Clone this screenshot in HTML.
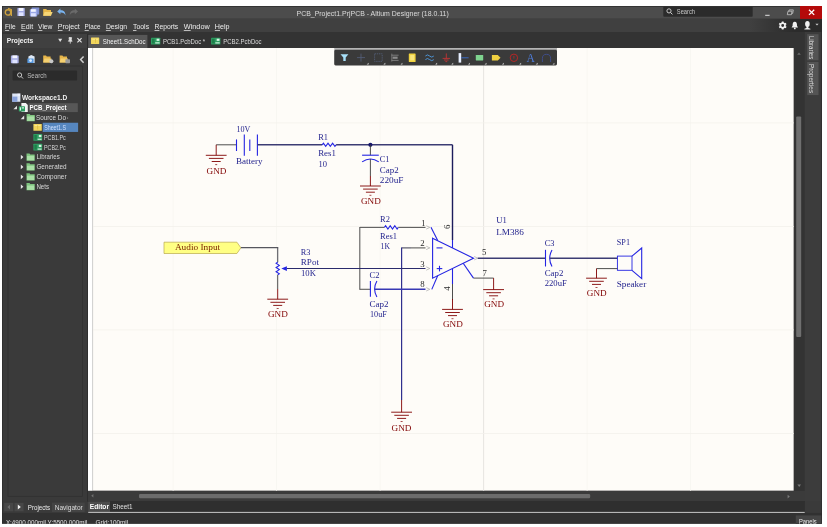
<!DOCTYPE html>
<html lang="en">
<head>
<meta charset="utf-8">
<title>PCB_Project1.PrjPCB - Altium Designer (18.0.11)</title>
<style>
html,body{margin:0;padding:0;background:#ffffff;}
body{width:827px;height:527px;overflow:hidden;position:relative;}
svg{position:absolute;left:0;top:0;display:block;will-change:transform;}
text.u{font-family:"Liberation Sans","DejaVu Sans",sans-serif;}
text.s{font-family:"Liberation Serif","DejaVu Serif",serif;}
</style>
</head>
<body>
<svg width="827" height="527" viewBox="0 0 827 527">
<defs>
<linearGradient id="mg" x1="0" x2="1" y1="0" y2="0"><stop offset="0" stop-color="#404040"/><stop offset="1" stop-color="#2b2b2b"/></linearGradient>
<clipPath id="appclip"><rect x="2" y="6" width="820" height="517.7"/></clipPath>
</defs>

<g id="chrome" clip-path="url(#appclip)">
<rect x="2" y="6" width="820" height="517.7" fill="#3a3a3a" />
<rect x="2" y="6" width="820" height="13" fill="#4c4c4c" />
<rect x="2" y="18.5" width="820" height="0.8" fill="#3a3a3a" />
<rect x="2" y="19" width="820" height="13" fill="#404040" />
<rect x="750" y="19" width="45" height="13" fill="url(#mg)" />
<rect x="795" y="19" width="27" height="13" fill="#2b2b2b" />
<rect x="2" y="32" width="820" height="16" fill="#333333" />
<rect x="2" y="34" width="85.3" height="14" fill="#404040" />
<rect x="2" y="48" width="85.3" height="454" fill="#3a3a3a" />
<rect x="87.3" y="34" width="0.9" height="468" fill="#2a2a2a" />
<rect x="88" y="48" width="705.8" height="442.8" fill="#fefcf8" />
<rect x="88" y="48" width="4.2" height="442.8" fill="#ffffff" />
<rect x="92.2" y="48" width="0.9" height="442.8" fill="#c9c9c9" />
<rect x="793.8" y="48" width="11" height="443" fill="#333333" />
<rect x="796.2" y="116.5" width="5" height="220.5" fill="#6f6f6f" rx="1"/>
<rect x="88" y="490.8" width="717" height="10.2" fill="#3b3b3b" />
<rect x="139" y="493.9" width="451.2" height="4.4" fill="#6c6c6c" rx="1.2"/>
<rect x="804.8" y="32" width="17.200000000000045" height="470" fill="#3c3c3c" />
<rect x="807.2" y="34.2" width="11.3" height="26.1" fill="#545454" />
<rect x="807.2" y="61.9" width="11.3" height="33.2" fill="#545454" />
<rect x="2" y="501.6" width="820" height="11" fill="#3a3a3a" />
<rect x="88" y="501" width="717" height="11.6" fill="#2f2f2f" />
<rect x="4.2" y="502.9" width="9.1" height="8.4" fill="#474747" />
<rect x="14.5" y="502.9" width="9.1" height="8.4" fill="#474747" />
<rect x="52" y="502.6" width="32.6" height="9.4" fill="#444444" />
<rect x="88.2" y="501.5" width="21.8" height="10.6" fill="#4c4c4c" />
<rect x="88.2" y="511.9" width="716.6" height="1" fill="#d6d6d6" />
<rect x="2" y="512.9" width="820" height="10.800000000000068" fill="#313131" />
<rect x="804.8" y="501.6" width="17.200000000000045" height="11" fill="#3a3a3a" />
<rect x="795.8" y="515.4" width="26.2" height="9" fill="#454545" />
<rect x="2.35" y="6.35" width="819.3" height="517" fill="none" stroke="#2c2c2c" stroke-width="0.7"/>
</g>
<g id="titlebar">
<circle cx="8" cy="12.4" r="2.7" fill="none" stroke="#cfa441" stroke-width="1.4"/>
<path d="M8 8.3 L11.4 9.6 L11.4 16" stroke="#cfa441" stroke-width="1.2" fill="none" />
<rect x="17.4" y="8" width="7.4" height="8" fill="#a4abe4" rx="0.6"/>
<rect x="18.8" y="8" width="4.6" height="3" fill="#f2f4ff" />
<rect x="18.8" y="12.4" width="4.6" height="3.6" fill="#dfe4ff" />
<rect x="31.6" y="7.6" width="7.6" height="7" fill="#7f8fd0" rx="0.6"/>
<rect x="29.8" y="9.2" width="7.4" height="7.2" fill="#9aa8e6" rx="0.6"/>
<rect x="31" y="9.2" width="4.8" height="2.6" fill="#f2f4ff" />
<rect x="31" y="13.2" width="4.8" height="3.2" fill="#dfe4ff" />
<path d="M43.2 9 L46.2 9 L47 10 L51 10 L51 15.8 L43.2 15.8 Z" stroke="none" stroke-width="0" fill="#e8b84a" />
<path d="M44.6 12 L52.6 12 L51 15.8 L43.2 15.8 Z" stroke="none" stroke-width="0" fill="#f6d676" />
<path d="M57.2 11.4 L60.4 8.6 L60.4 10.3 C63.6 10.2 65.6 12 65.4 15.4 C64.6 13.4 63.2 12.5 60.4 12.6 L60.4 14.2 Z" stroke="none" stroke-width="0" fill="#79b4f0" />
<path d="M78 11.4 L74.8 8.6 L74.8 10.3 C71.6 10.2 69.6 12 69.8 15.4 C70.6 13.4 72 12.5 74.8 12.6 L74.8 14.2 Z" stroke="none" stroke-width="0" fill="#6a6a6a" />
<text x="296.5" y="15.6" font-size="7.2" fill="#dcdcdc" class="u" textLength="152.3" lengthAdjust="spacingAndGlyphs" >PCB_Project1.PrjPCB - Altium Designer (18.0.11)</text>
<rect x="663.3" y="6.8" width="89.4" height="9.9" fill="#2b2b2b" rx="0.8"/>
<circle cx="669" cy="10.9" r="2.1" stroke="#d8d8d8" stroke-width="0.9" fill="none"/>
<line x1="670.6" y1="12.5" x2="672.4" y2="14.4" stroke="#d8d8d8" stroke-width="1" />
<text x="676.8" y="14" font-size="7" fill="#c8c8c8" class="u" textLength="18.2" lengthAdjust="spacingAndGlyphs" >Search</text>
<rect x="765.2" y="14.8" width="4.4" height="1" fill="#e0e0e0" />
<path d="M788 11.2 L792 11.2 L791.4 14.7 L787.3 14.7 Z M788.8 11.2 L789.2 9.9 L793.3 9.9 L792.7 13.4 L791.8 13.4" stroke="#d0d0d0" stroke-width="0.75" fill="none" />
<rect x="800" y="6" width="22" height="12.9" fill="#b40a0a" />
<path d="M809 9.7 L814.2 14.9 M814.2 9.7 L809 14.9" stroke="#ffffff" stroke-width="1.3" fill="none" />
</g>
<g id="menubar">
<text x="5.1" y="29.1" font-size="7.3" fill="#ececec" class="u" textLength="10.6" lengthAdjust="spacingAndGlyphs" ><tspan text-decoration="underline">F</tspan>ile</text>
<text x="21" y="29.1" font-size="7.3" fill="#ececec" class="u" textLength="12.1" lengthAdjust="spacingAndGlyphs" ><tspan text-decoration="underline">E</tspan>dit</text>
<text x="38" y="29.1" font-size="7.3" fill="#ececec" class="u" textLength="14.5" lengthAdjust="spacingAndGlyphs" ><tspan text-decoration="underline">V</tspan>iew</text>
<text x="57.8" y="29.1" font-size="7.3" fill="#ececec" class="u" textLength="22.0" lengthAdjust="spacingAndGlyphs" ><tspan text-decoration="underline">P</tspan>roject</text>
<text x="84.6" y="29.1" font-size="7.3" fill="#ececec" class="u" textLength="15.8" lengthAdjust="spacingAndGlyphs" ><tspan text-decoration="underline">P</tspan>lace</text>
<text x="105.9" y="29.1" font-size="7.3" fill="#ececec" class="u" textLength="21.2" lengthAdjust="spacingAndGlyphs" ><tspan text-decoration="underline">D</tspan>esign</text>
<text x="133" y="29.1" font-size="7.3" fill="#ececec" class="u" textLength="16.1" lengthAdjust="spacingAndGlyphs" ><tspan text-decoration="underline">T</tspan>ools</text>
<text x="154.5" y="29.1" font-size="7.3" fill="#ececec" class="u" textLength="23.7" lengthAdjust="spacingAndGlyphs" ><tspan text-decoration="underline">R</tspan>eports</text>
<text x="183.8" y="29.1" font-size="7.3" fill="#ececec" class="u" textLength="25.9" lengthAdjust="spacingAndGlyphs" ><tspan text-decoration="underline">W</tspan>indow</text>
<text x="214.8" y="29.1" font-size="7.3" fill="#ececec" class="u" textLength="14.7" lengthAdjust="spacingAndGlyphs" ><tspan text-decoration="underline">H</tspan>elp</text>
<g transform="translate(782.7 25.5)">
<circle r="2.3" fill="none" stroke="#f2f2f2" stroke-width="1.7"/>
<rect x="-0.9" y="-4" width="1.8" height="1.6" fill="#f2f2f2" transform="rotate(0)"/>
<rect x="-0.9" y="-4" width="1.8" height="1.6" fill="#f2f2f2" transform="rotate(60)"/>
<rect x="-0.9" y="-4" width="1.8" height="1.6" fill="#f2f2f2" transform="rotate(120)"/>
<rect x="-0.9" y="-4" width="1.8" height="1.6" fill="#f2f2f2" transform="rotate(180)"/>
<rect x="-0.9" y="-4" width="1.8" height="1.6" fill="#f2f2f2" transform="rotate(240)"/>
<rect x="-0.9" y="-4" width="1.8" height="1.6" fill="#f2f2f2" transform="rotate(300)"/>
</g>
<path d="M794.8 21.8 C796.8 21.8 797 24 797 25.8 L798 27.4 L791.6 27.4 L792.6 25.8 C792.6 24 792.8 21.8 794.8 21.8 Z" stroke="none" stroke-width="0" fill="#f2f2f2" />
<circle cx="794.8" cy="28.4" r="0.9" fill="#f2f2f2"/>
<ellipse cx="807.4" cy="24" rx="2.3" ry="2.9" fill="#f2f2f2"/>
<path d="M806.6 26 L808.2 26 L808.4 28 L810.4 28.8 L810.4 29.6 L804.4 29.6 L804.4 28.8 L806.4 28 Z" stroke="none" stroke-width="0" fill="#f2f2f2" />
<path d="M815.4 23.8 L818.6 23.8 L817 25.6 Z" stroke="none" stroke-width="0" fill="#cfcfcf" />
</g>
<g id="tabs">
<text x="6.7" y="43.2" font-size="7.3" fill="#f0f0f0" class="u" font-weight="bold" textLength="26.7" lengthAdjust="spacingAndGlyphs" >Projects</text>
<path d="M58.2 38.8 L62.2 38.8 L60.2 42 Z" stroke="none" stroke-width="0" fill="#e0e0e0" />
<path d="M69 37.6 L71.6 37.6 L71.2 40 L72.2 41.2 L68.4 41.2 L69.4 40 Z M70.3 41.2 L70.3 43.6" stroke="#e0e0e0" stroke-width="0.8" fill="#e0e0e0" />
<path d="M77.4 38.2 L81.6 42.4 M81.6 38.2 L77.4 42.4" stroke="#e8e8e8" stroke-width="1.1" fill="none" />
<rect x="88.2" y="34.9" width="59.2" height="13.1" fill="#575757" />
<rect x="91" y="37.5" width="8.2" height="6.5" fill="#f2d65c" rx="0.5"/>
<rect x="92.2" y="38.8" width="5.8" height="0.7" fill="#fdf0a8" />
<rect x="95" y="38.8" width="0.7" height="4" fill="#d9b840" />
<text x="102.8" y="44" font-size="7.2" fill="#f4f4f4" class="u" textLength="42.8" lengthAdjust="spacingAndGlyphs" >Sheet1.SchDoc</text>
<rect x="151" y="37.8" width="9.3" height="6.6" fill="#2f9e62" rx="0.5"/>
<rect x="152" y="38.8" width="2.6" height="4.6" fill="#1d7f4a" />
<rect x="156.6" y="38.699999999999996" width="2.8" height="2.2" fill="#d8f5e4" />
<rect x="155.2" y="42.4" width="4.4" height="1" fill="#e6fff0" />
<text x="162.9" y="44" font-size="7.2" fill="#dcdcdc" class="u" textLength="42.3" lengthAdjust="spacingAndGlyphs" >PCB1.PcbDoc *</text>
<rect x="211.1" y="37.8" width="9.3" height="6.6" fill="#2f9e62" rx="0.5"/>
<rect x="212.1" y="38.8" width="2.6" height="4.6" fill="#1d7f4a" />
<rect x="216.7" y="38.699999999999996" width="2.8" height="2.2" fill="#d8f5e4" />
<rect x="215.29999999999998" y="42.4" width="4.4" height="1" fill="#e6fff0" />
<text x="223.3" y="44" font-size="7.2" fill="#dcdcdc" class="u" textLength="38.3" lengthAdjust="spacingAndGlyphs" >PCB2.PcbDoc</text>
</g>
<g id="projects-panel">
<rect x="10.9" y="55.4" width="7.8" height="7.8" fill="#a9afe6" rx="0.6"/>
<rect x="12.4" y="55.4" width="4.8" height="2.8" fill="#f2f4ff" />
<rect x="12.4" y="59.8" width="4.8" height="3.4" fill="#dfe4ff" />
<path d="M28.4 56.4 L31.2 55 L34.6 56.4 L34.6 63 L28.4 63 Z" stroke="none" stroke-width="0" fill="#dfe9f6" />
<rect x="27.4" y="58.4" width="6.2" height="4.6" fill="#5a9be0" rx="0.5"/>
<circle cx="30.6" cy="60.6" r="1.4" fill="#dfeeff"/>
<path d="M43.2 55.6 L46 55.6 L46.8 56.6 L50.6 56.6 L50.6 62.6 L43.2 62.6 Z" stroke="none" stroke-width="0" fill="#e6b54a" />
<path d="M44.4 58.4 L51.6 58.4 L50.6 62.6 L43.2 62.6 Z" stroke="none" stroke-width="0" fill="#f4d070" />
<circle cx="51.4" cy="61.2" r="2" fill="#c9c9c9"/>
<path d="M59.6 55.6 L62.4 55.6 L63.2 56.6 L67 56.6 L67 62.6 L59.6 62.6 Z" stroke="none" stroke-width="0" fill="#e6b54a" />
<path d="M60.8 58.4 L68 58.4 L67 62.6 L59.6 62.6 Z" stroke="none" stroke-width="0" fill="#f4d070" />
<rect x="65.4" y="59.2" width="4.6" height="4" fill="#9a9a9a" rx="0.6"/>
<path d="M83.6 56.4 L80.6 59.6 L83.6 62.8" stroke="#d0d0d0" stroke-width="1.5" fill="none" />
<rect x="8" y="66" width="74.6" height="430.3" fill="none" stroke="#2f2f2f" stroke-width="0.7"/>
<rect x="12.6" y="70.6" width="64.5" height="10" fill="#2b2b2b" rx="0.8"/>
<circle cx="19.6" cy="75" r="2.1" stroke="#cfcfcf" stroke-width="0.9" fill="none"/>
<line x1="21.2" y1="76.6" x2="23" y2="78.5" stroke="#cfcfcf" stroke-width="1" />
<text x="27.3" y="78.2" font-size="7" fill="#bdbdbd" class="u" textLength="19.3" lengthAdjust="spacingAndGlyphs" >Search</text>
<path d="M12.2 93.39999999999999 L17.6 93.39999999999999 L20.4 96.0 L20.4 101.8 L12.2 101.8 Z" stroke="none" stroke-width="0" fill="#dde5f5" />
<rect x="12.2" y="96.6" width="5.2" height="5.2" fill="#8aa3dd" />
<rect x="17.6" y="93.39999999999999" width="2.8" height="2.6" fill="#eef2ff" />
<text x="21.9" y="100.2" font-size="7.2" fill="#f2f2f2" class="u" font-weight="bold" textLength="45.3" lengthAdjust="spacingAndGlyphs" >Workspace1.D</text>
<rect x="28.6" y="103.17999999999999" width="49.2" height="8.9" fill="#575757" />
<path d="M17.0 105.67999999999999 L17.0 109.27999999999999 L13.4 109.27999999999999 Z" stroke="none" stroke-width="0" fill="#e4e4e4" />
<path d="M21.4 103.08 L25.8 103.08 L27.8 104.88 L27.8 111.88 L21.4 111.88 Z" stroke="none" stroke-width="0" fill="#f4f4f4" />
<rect x="18.8" y="106.27999999999999" width="6.2" height="5.2" fill="#2f9e62" rx="0.4"/>
<rect x="19.8" y="107.27999999999999" width="1.2" height="3.2" fill="#dff5e8" />
<rect x="21.8" y="107.27999999999999" width="2.2" height="1.2" fill="#dff5e8" />
<text x="29.5" y="110.08" font-size="7.2" fill="#ffffff" class="u" font-weight="bold" textLength="37.0" lengthAdjust="spacingAndGlyphs" >PCB_Project</text>
<path d="M24.2 115.56 L24.2 119.16 L20.6 119.16 Z" stroke="none" stroke-width="0" fill="#e4e4e4" />
<path d="M26.6 113.96000000000001 L29.6 113.96000000000001 L30.400000000000002 114.96000000000001 L34.8 114.96000000000001 L34.8 121.16000000000001 L26.6 121.16000000000001 Z" stroke="none" stroke-width="0" fill="#7fc47f" />
<rect x="27.1" y="116.36000000000001" width="7.2" height="4.4" fill="#a9dfa6" />
<text x="35.9" y="119.96000000000001" font-size="7.2" fill="#dadada" class="u" textLength="30.1" lengthAdjust="spacingAndGlyphs" >Source Do</text>
<circle cx="67.6" cy="117.96000000000001" r="0.5" fill="#d0d0d0"/>
<rect x="42.7" y="122.74" width="35.4" height="9.2" fill="#5686be" />
<rect x="33.4" y="124.03999999999999" width="8.4" height="6.6" fill="#f2d65c" rx="0.5"/>
<rect x="34.6" y="125.24" width="6" height="0.7" fill="#fdf0a8" />
<rect x="37.4" y="125.24" width="0.7" height="4.2" fill="#d9b840" />
<text x="44.2" y="129.84" font-size="7.2" fill="#cfe0ff" class="u" textLength="21.8" lengthAdjust="spacingAndGlyphs" >Sheet1.S</text>
<rect x="33.4" y="133.92" width="8.8" height="6.8" fill="#2f9e62" rx="0.5"/>
<rect x="34.4" y="134.92" width="2.4" height="4.8" fill="#1d7f4a" />
<rect x="38.8" y="134.92" width="2.6" height="2.2" fill="#d8f5e4" />
<rect x="37.6" y="138.72" width="4" height="1" fill="#e6fff0" />
<text x="44" y="139.72" font-size="7.2" fill="#dadada" class="u" textLength="21.8" lengthAdjust="spacingAndGlyphs" >PCB1.Pc</text>
<rect x="33.4" y="143.79999999999998" width="8.8" height="6.8" fill="#2f9e62" rx="0.5"/>
<rect x="34.4" y="144.79999999999998" width="2.4" height="4.8" fill="#1d7f4a" />
<rect x="38.8" y="144.79999999999998" width="2.6" height="2.2" fill="#d8f5e4" />
<rect x="37.6" y="148.6" width="4" height="1" fill="#e6fff0" />
<text x="44" y="149.6" font-size="7.2" fill="#dadada" class="u" textLength="21.8" lengthAdjust="spacingAndGlyphs" >PCB2.Pc</text>
<path d="M20.8 154.67999999999998 L23.400000000000002 157.07999999999998 L20.8 159.48 Z" stroke="none" stroke-width="0" fill="#e4e4e4" />
<path d="M26.5 153.48 L29.5 153.48 L30.3 154.48 L34.7 154.48 L34.7 160.67999999999998 L26.5 160.67999999999998 Z" stroke="none" stroke-width="0" fill="#7fc47f" />
<rect x="27.0" y="155.88" width="7.2" height="4.4" fill="#a9dfa6" />
<text x="36.4" y="159.48" font-size="7.2" fill="#dadada" class="u" textLength="23.4" lengthAdjust="spacingAndGlyphs" >Libraries</text>
<path d="M20.8 164.56 L23.400000000000002 166.96 L20.8 169.36 Z" stroke="none" stroke-width="0" fill="#e4e4e4" />
<path d="M26.5 163.36 L29.5 163.36 L30.3 164.36 L34.7 164.36 L34.7 170.56 L26.5 170.56 Z" stroke="none" stroke-width="0" fill="#7fc47f" />
<rect x="27.0" y="165.76000000000002" width="7.2" height="4.4" fill="#a9dfa6" />
<text x="36.4" y="169.36" font-size="7.2" fill="#dadada" class="u" textLength="30.2" lengthAdjust="spacingAndGlyphs" >Generated</text>
<path d="M20.8 174.44 L23.400000000000002 176.84 L20.8 179.24 Z" stroke="none" stroke-width="0" fill="#e4e4e4" />
<path d="M26.5 173.24 L29.5 173.24 L30.3 174.24 L34.7 174.24 L34.7 180.44 L26.5 180.44 Z" stroke="none" stroke-width="0" fill="#7fc47f" />
<rect x="27.0" y="175.64000000000001" width="7.2" height="4.4" fill="#a9dfa6" />
<text x="36.4" y="179.24" font-size="7.2" fill="#dadada" class="u" textLength="30.2" lengthAdjust="spacingAndGlyphs" >Componer</text>
<path d="M20.8 184.32 L23.400000000000002 186.72 L20.8 189.12 Z" stroke="none" stroke-width="0" fill="#e4e4e4" />
<path d="M26.5 183.12 L29.5 183.12 L30.3 184.12 L34.7 184.12 L34.7 190.32 L26.5 190.32 Z" stroke="none" stroke-width="0" fill="#7fc47f" />
<rect x="27.0" y="185.52" width="7.2" height="4.4" fill="#a9dfa6" />
<text x="36.4" y="189.12" font-size="7.2" fill="#dadada" class="u" textLength="12.6" lengthAdjust="spacingAndGlyphs" >Nets</text>
</g>
<g id="right-strip">
<text x="0" y="0" font-size="7.3" fill="#dcdcdc" class="u" textLength="23.2" lengthAdjust="spacingAndGlyphs" transform="translate(809.2 36) rotate(90)">Libraries</text>
<text x="0" y="0" font-size="7.3" fill="#dcdcdc" class="u" textLength="29.2" lengthAdjust="spacingAndGlyphs" transform="translate(809.2 63.9) rotate(90)">Properties</text>
<path d="M797.2 54.8 L799 52.4 L800.8 54.8 Z" stroke="none" stroke-width="0" fill="#6c6c6c" />
<path d="M797.4 484.6 L799.2 487 L801 484.6 Z" stroke="none" stroke-width="0" fill="#7a7a7a" />
<path d="M93.4 494 L91.2 495.8 L93.4 497.6 Z" stroke="none" stroke-width="0" fill="#707070" />
<path d="M787.6 494.8 L789.8 496.6 L787.6 498.4 Z" stroke="none" stroke-width="0" fill="#7a7a7a" />
</g>
<g id="bottom" clip-path="url(#appclip)">
<path d="M10 504.8 L7.4 507.1 L10 509.4 Z" stroke="none" stroke-width="0" fill="#6e6e6e" />
<path d="M17.8 504.6 L20.8 507.1 L17.8 509.6 Z" stroke="none" stroke-width="0" fill="#f4f4f4" />
<text x="27.8" y="509.5" font-size="7.2" fill="#ececec" class="u" textLength="22.4" lengthAdjust="spacingAndGlyphs" >Projects</text>
<text x="54.7" y="509.5" font-size="7.2" fill="#dcdcdc" class="u" textLength="28.1" lengthAdjust="spacingAndGlyphs" >Navigator</text>
<text x="89.8" y="509.2" font-size="7.2" fill="#ffffff" class="u" font-weight="bold" textLength="19.2" lengthAdjust="spacingAndGlyphs" >Editor</text>
<text x="112.4" y="509.2" font-size="7.2" fill="#e0e0e0" class="u" textLength="20.2" lengthAdjust="spacingAndGlyphs" >Sheet1</text>
<text x="5.9" y="524.5" font-size="7" fill="#e0e0e0" class="u" textLength="81.4" lengthAdjust="spacingAndGlyphs" >X:4900.000mil Y:5500.000mil</text>
<text x="95.6" y="524.5" font-size="7" fill="#e0e0e0" class="u" textLength="32.6" lengthAdjust="spacingAndGlyphs" >Grid:100mil</text>
<text x="799" y="524" font-size="7" fill="#ececec" class="u" textLength="17.6" lengthAdjust="spacingAndGlyphs" >Panels</text>
</g>
<g id="schematic">
<rect x="172.7" y="48" width="0.8" height="442.8" fill="#f7f5f0" />
<rect x="276.20000000000005" y="48" width="0.8" height="442.8" fill="#f7f5f0" />
<rect x="379.70000000000005" y="48" width="0.8" height="442.8" fill="#f7f5f0" />
<rect x="586.7" y="48" width="0.8" height="442.8" fill="#f7f5f0" />
<rect x="690.2" y="48" width="0.8" height="442.8" fill="#f7f5f0" />
<rect x="483.2" y="48" width="0.9" height="442.8" fill="#e4e2de" />
<rect x="93" y="122.5" width="700.8" height="0.8" fill="#f3f1ec" />
<rect x="93" y="226.0" width="700.8" height="0.8" fill="#f3f1ec" />
<rect x="93" y="329.5" width="700.8" height="0.8" fill="#f3f1ec" />
<rect x="93" y="433.0" width="700.8" height="0.8" fill="#f3f1ec" />
<line x1="216.2" y1="144.8" x2="236.5" y2="144.8" stroke="#3a3a3a" stroke-width="0.9" />
<line x1="216.2" y1="144.8" x2="216.2" y2="155.3" stroke="#800000" stroke-width="0.9" />
<line x1="205.79999999999998" y1="155.3" x2="226.6" y2="155.3" stroke="#800000" stroke-width="0.9" />
<line x1="208.89999999999998" y1="158.4" x2="223.5" y2="158.4" stroke="#800000" stroke-width="0.9" />
<line x1="211.7" y1="161.5" x2="220.7" y2="161.5" stroke="#800000" stroke-width="0.9" />
<line x1="215.2" y1="164.60000000000002" x2="217.2" y2="164.60000000000002" stroke="#800000" stroke-width="0.7" />
<text x="206.6" y="173.5" font-size="8.8" fill="#800000" class="s" textLength="19.8" lengthAdjust="spacingAndGlyphs" >GND</text>
<line x1="236.5" y1="139.4" x2="236.5" y2="151" stroke="#2424e2" stroke-width="1.1" />
<line x1="244.3" y1="134.6" x2="244.3" y2="155.8" stroke="#2424e2" stroke-width="1.1" />
<line x1="249.8" y1="139.4" x2="249.8" y2="151" stroke="#2424e2" stroke-width="1.1" />
<line x1="257.4" y1="134.6" x2="257.4" y2="155.8" stroke="#2424e2" stroke-width="1.1" />
<text x="236.5" y="131.8" font-size="9.1" fill="#24248e" class="s" textLength="13.9" lengthAdjust="spacingAndGlyphs" >10V</text>
<text x="236" y="164.3" font-size="9.1" fill="#24248e" class="s" textLength="26.6" lengthAdjust="spacingAndGlyphs" >Battery</text>
<line x1="257.4" y1="144.8" x2="322.2" y2="144.8" stroke="#3c3c74" stroke-width="1.4" />
<path d="M322.2 144.8 l1.2 -1.6 l2.3 3.2 l2.3 -3.2 l2.3 3.2 l2.3 -3.2 l2.3 3.2 l1.2 -1.6" stroke="#2424e2" stroke-width="1.1" fill="none" stroke-linejoin="miter"/>
<line x1="336.1" y1="144.8" x2="452.5" y2="144.8" stroke="#3c3c74" stroke-width="1.4" />
<text x="318.2" y="139.8" font-size="9.1" fill="#24248e" class="s" textLength="9.8" lengthAdjust="spacingAndGlyphs" >R1</text>
<text x="318.2" y="156.2" font-size="9.1" fill="#24248e" class="s" textLength="17.8" lengthAdjust="spacingAndGlyphs" >Res1</text>
<text x="318.5" y="166.5" font-size="9.1" fill="#24248e" class="s" textLength="8.5" lengthAdjust="spacingAndGlyphs" >10</text>
<circle cx="370.4" cy="144.8" r="2.1" fill="#16166c"/>
<line x1="370.4" y1="144.8" x2="370.4" y2="155.2" stroke="#3a3a3a" stroke-width="0.9" />
<line x1="362.1" y1="155.2" x2="378.8" y2="155.2" stroke="#2424e2" stroke-width="1.1" />
<path d="M362.1 161.9 Q370.4 156.2 378.8 161.9" stroke="#2424e2" stroke-width="1.1" fill="none" />
<line x1="370.4" y1="159.1" x2="370.4" y2="176" stroke="#3a3a3a" stroke-width="0.9" />
<line x1="370.4" y1="176" x2="370.4" y2="186" stroke="#800000" stroke-width="0.9" />
<line x1="360.0" y1="186.0" x2="380.79999999999995" y2="186.0" stroke="#800000" stroke-width="0.9" />
<line x1="363.09999999999997" y1="189.1" x2="377.7" y2="189.1" stroke="#800000" stroke-width="0.9" />
<line x1="365.9" y1="192.2" x2="374.9" y2="192.2" stroke="#800000" stroke-width="0.9" />
<line x1="369.4" y1="195.3" x2="371.4" y2="195.3" stroke="#800000" stroke-width="0.7" />
<text x="361" y="204.1" font-size="8.8" fill="#800000" class="s" textLength="19.8" lengthAdjust="spacingAndGlyphs" >GND</text>
<text x="379.8" y="162.1" font-size="9.1" fill="#24248e" class="s" textLength="9.7" lengthAdjust="spacingAndGlyphs" >C1</text>
<text x="379.8" y="172.5" font-size="9.1" fill="#24248e" class="s" textLength="18.8" lengthAdjust="spacingAndGlyphs" >Cap2</text>
<text x="379.8" y="182.8" font-size="9.1" fill="#24248e" class="s" textLength="23.7" lengthAdjust="spacingAndGlyphs" >220uF</text>
<line x1="452.5" y1="144.8" x2="452.5" y2="240" stroke="#1c1c5c" stroke-width="1.4" />
<line x1="452.5" y1="240" x2="452.5" y2="247.9" stroke="#2424e2" stroke-width="1.1" />
<path d="M432.6 238.2 L473.5 258.2 L432.6 278.2 Z" stroke="#2424e2" stroke-width="1.1" fill="none" stroke-linejoin="miter"/>
<line x1="359.8" y1="227.4" x2="384.4" y2="227.4" stroke="#5c5c5c" stroke-width="1.1" />
<path d="M384.4 227.4 l1.2 -1.6 l2.3 3.2 l2.3 -3.2 l2.3 3.2 l2.3 -3.2 l2.3 3.2 l1.2 -1.6" stroke="#2424e2" stroke-width="1.1" fill="none" stroke-linejoin="miter"/>
<line x1="398.3" y1="227.4" x2="411" y2="227.4" stroke="#5c5c5c" stroke-width="1.1" />
<line x1="411" y1="227.4" x2="425.5" y2="227.4" stroke="#3a3a3a" stroke-width="0.9" />
<path d="M426.2 225.70000000000002 L429.8 227.4 L426.2 229.1" stroke="#9a9a9a" stroke-width="0.6" fill="none" />
<line x1="431" y1="227.2" x2="437.7" y2="240.6" stroke="#2424e2" stroke-width="1.1" />
<line x1="359.8" y1="226.9" x2="359.8" y2="289.8" stroke="#5c5c5c" stroke-width="1.1" />
<text x="380.1" y="222.2" font-size="9.1" fill="#24248e" class="s" textLength="9.9" lengthAdjust="spacingAndGlyphs" >R2</text>
<text x="380.1" y="238.6" font-size="9.1" fill="#24248e" class="s" textLength="17.0" lengthAdjust="spacingAndGlyphs" >Res1</text>
<text x="380.5" y="248.9" font-size="9.1" fill="#24248e" class="s" textLength="9.5" lengthAdjust="spacingAndGlyphs" >1K</text>
<line x1="401.6" y1="247.9" x2="411" y2="247.9" stroke="#4a4a5c" stroke-width="1.1" />
<line x1="411" y1="247.9" x2="425.5" y2="247.9" stroke="#3a3a3a" stroke-width="0.9" />
<path d="M426.2 246.20000000000002 L429.8 247.9 L426.2 249.6" stroke="#9a9a9a" stroke-width="0.6" fill="none" />
<line x1="436.5" y1="247.9" x2="442.5" y2="247.9" stroke="#2424e2" stroke-width="1.1" />
<line x1="401.6" y1="247.4" x2="401.6" y2="400" stroke="#30308e" stroke-width="1.2" />
<line x1="401.6" y1="400" x2="401.6" y2="412.2" stroke="#800000" stroke-width="0.9" />
<line x1="391.20000000000005" y1="412.2" x2="412.0" y2="412.2" stroke="#800000" stroke-width="0.9" />
<line x1="394.3" y1="415.3" x2="408.90000000000003" y2="415.3" stroke="#800000" stroke-width="0.9" />
<line x1="397.1" y1="418.4" x2="406.1" y2="418.4" stroke="#800000" stroke-width="0.9" />
<line x1="400.6" y1="421.5" x2="402.6" y2="421.5" stroke="#800000" stroke-width="0.7" />
<text x="391.6" y="430.8" font-size="8.8" fill="#800000" class="s" textLength="19.8" lengthAdjust="spacingAndGlyphs" >GND</text>
<line x1="286.8" y1="268.5" x2="425.5" y2="268.5" stroke="#2a2a6c" stroke-width="1.15" />
<path d="M426.2 266.8 L429.8 268.5 L426.2 270.2" stroke="#9a9a9a" stroke-width="0.6" fill="none" />
<line x1="436.7" y1="268.6" x2="442.3" y2="268.6" stroke="#2424e2" stroke-width="1.1" />
<line x1="439.5" y1="265.8" x2="439.5" y2="271.4" stroke="#2424e2" stroke-width="1.1" />
<line x1="359.8" y1="289.3" x2="370.4" y2="289.3" stroke="#5c5c5c" stroke-width="1.1" />
<line x1="370.4" y1="280.9" x2="370.4" y2="296.8" stroke="#2424e2" stroke-width="1.1" />
<path d="M376.9 281 Q372.3 289 376.9 297" stroke="#2424e2" stroke-width="1.1" fill="none" />
<line x1="374.7" y1="289.3" x2="425.5" y2="289.3" stroke="#3838b4" stroke-width="1.4" />
<path d="M426.2 287.6 L429.8 289.3 L426.2 291.0" stroke="#9a9a9a" stroke-width="0.6" fill="none" />
<line x1="431.8" y1="289.4" x2="437.7" y2="275.7" stroke="#2424e2" stroke-width="1.1" />
<text x="369.5" y="277.6" font-size="9.1" fill="#24248e" class="s" textLength="10.0" lengthAdjust="spacingAndGlyphs" >C2</text>
<text x="369.5" y="306.8" font-size="9.1" fill="#24248e" class="s" textLength="19.1" lengthAdjust="spacingAndGlyphs" >Cap2</text>
<text x="370" y="316.9" font-size="9.1" fill="#24248e" class="s" textLength="16.8" lengthAdjust="spacingAndGlyphs" >10uF</text>
<text x="421.3" y="225.8" font-size="9.1" fill="#2a2a2a" class="s" textLength="4.3" lengthAdjust="spacingAndGlyphs" >1</text>
<text x="420.2" y="245.8" font-size="9.1" fill="#2a2a2a" class="s" textLength="4.4" lengthAdjust="spacingAndGlyphs" >2</text>
<text x="420.2" y="266.5" font-size="9.1" fill="#2a2a2a" class="s" textLength="4.4" lengthAdjust="spacingAndGlyphs" >3</text>
<text x="420.2" y="287" font-size="9.1" fill="#2a2a2a" class="s" textLength="4.4" lengthAdjust="spacingAndGlyphs" >8</text>
<text x="482" y="255.2" font-size="9.1" fill="#2a2a2a" class="s" textLength="4.4" lengthAdjust="spacingAndGlyphs" >5</text>
<text x="482.4" y="276.3" font-size="9.1" fill="#2a2a2a" class="s" textLength="4.4" lengthAdjust="spacingAndGlyphs" >7</text>
<text x="0" y="0" font-size="9.1" fill="#2a2a2a" class="s" textLength="4.4" lengthAdjust="spacingAndGlyphs" transform="translate(450.2 229) rotate(-90)">6</text>
<text x="0" y="0" font-size="9.1" fill="#2a2a2a" class="s" textLength="4.4" lengthAdjust="spacingAndGlyphs" transform="translate(450.2 290.8) rotate(-90)">4</text>
<line x1="452.5" y1="268.5" x2="452.5" y2="284" stroke="#2424e2" stroke-width="1.1" />
<line x1="452.5" y1="284" x2="452.5" y2="300" stroke="#3a3a3a" stroke-width="0.9" />
<line x1="452.5" y1="299" x2="452.5" y2="309.4" stroke="#800000" stroke-width="0.9" />
<line x1="442.1" y1="309.4" x2="462.9" y2="309.4" stroke="#800000" stroke-width="0.9" />
<line x1="445.2" y1="312.5" x2="459.8" y2="312.5" stroke="#800000" stroke-width="0.9" />
<line x1="448.0" y1="315.59999999999997" x2="457.0" y2="315.59999999999997" stroke="#800000" stroke-width="0.9" />
<line x1="451.5" y1="318.7" x2="453.5" y2="318.7" stroke="#800000" stroke-width="0.7" />
<text x="443" y="327" font-size="8.8" fill="#800000" class="s" textLength="19.8" lengthAdjust="spacingAndGlyphs" >GND</text>
<line x1="463.2" y1="263.2" x2="473.5" y2="278.1" stroke="#2424e2" stroke-width="1.1" />
<line x1="473.5" y1="278.1" x2="493.6" y2="278.1" stroke="#3a3a3a" stroke-width="0.9" />
<line x1="493.6" y1="278.1" x2="493.6" y2="289.6" stroke="#800000" stroke-width="0.9" />
<line x1="483.20000000000005" y1="289.6" x2="504.0" y2="289.6" stroke="#800000" stroke-width="0.9" />
<line x1="486.3" y1="292.70000000000005" x2="500.90000000000003" y2="292.70000000000005" stroke="#800000" stroke-width="0.9" />
<line x1="489.1" y1="295.8" x2="498.1" y2="295.8" stroke="#800000" stroke-width="0.9" />
<line x1="492.6" y1="298.90000000000003" x2="494.6" y2="298.90000000000003" stroke="#800000" stroke-width="0.7" />
<text x="484.2" y="307" font-size="8.8" fill="#800000" class="s" textLength="19.8" lengthAdjust="spacingAndGlyphs" >GND</text>
<path d="M474.2 256.5 L477.8 258.2 L474.2 259.9" stroke="#9a9a9a" stroke-width="0.6" fill="none" />
<line x1="477.8" y1="258.2" x2="545.5" y2="258.2" stroke="#3c3c74" stroke-width="1.4" />
<line x1="545.5" y1="249.8" x2="545.5" y2="266.5" stroke="#2424e2" stroke-width="1.1" />
<path d="M552 249.9 Q547.4 258.2 552 266.5" stroke="#2424e2" stroke-width="1.1" fill="none" />
<line x1="549.8" y1="258.2" x2="617.4" y2="258.2" stroke="#3c3c74" stroke-width="1.4" />
<text x="544.7" y="246.4" font-size="9.1" fill="#24248e" class="s" textLength="9.7" lengthAdjust="spacingAndGlyphs" >C3</text>
<text x="544.7" y="275.6" font-size="9.1" fill="#24248e" class="s" textLength="18.7" lengthAdjust="spacingAndGlyphs" >Cap2</text>
<text x="544.7" y="285.9" font-size="9.1" fill="#24248e" class="s" textLength="22.1" lengthAdjust="spacingAndGlyphs" >220uF</text>
<text x="496.2" y="223.4" font-size="9.1" fill="#24248e" class="s" textLength="10.6" lengthAdjust="spacingAndGlyphs" >U1</text>
<text x="496.2" y="234.5" font-size="9.1" fill="#24248e" class="s" textLength="27.6" lengthAdjust="spacingAndGlyphs" >LM386</text>
<rect x="617.4" y="256.1" width="14.6" height="14.2" fill="none" stroke="#2424e2" stroke-width="0.9"/>
<path d="M632 256.1 L641.7 248 L641.7 278.6 L632 270.3" stroke="#2424e2" stroke-width="1.1" fill="none" />
<line x1="596.5" y1="268.6" x2="617.4" y2="268.6" stroke="#3a3a3a" stroke-width="0.9" />
<line x1="596.5" y1="268.6" x2="596.5" y2="278.2" stroke="#800000" stroke-width="0.9" />
<line x1="586.1" y1="278.2" x2="606.9" y2="278.2" stroke="#800000" stroke-width="0.9" />
<line x1="589.2" y1="281.3" x2="603.8" y2="281.3" stroke="#800000" stroke-width="0.9" />
<line x1="592.0" y1="284.4" x2="601.0" y2="284.4" stroke="#800000" stroke-width="0.9" />
<line x1="595.5" y1="287.5" x2="597.5" y2="287.5" stroke="#800000" stroke-width="0.7" />
<text x="586.8" y="296.4" font-size="8.8" fill="#800000" class="s" textLength="19.8" lengthAdjust="spacingAndGlyphs" >GND</text>
<text x="616.8" y="244.6" font-size="9.1" fill="#24248e" class="s" textLength="13.2" lengthAdjust="spacingAndGlyphs" >SP1</text>
<text x="616.8" y="287.1" font-size="9.1" fill="#24248e" class="s" textLength="29.4" lengthAdjust="spacingAndGlyphs" >Speaker</text>
<path d="M164 242.2 L236.9 242.2 L240.9 247.8 L236.9 253.5 L164 253.5 Z" stroke="#b9a94a" stroke-width="0.7" fill="#ffff84" />
<text x="174.9" y="250.4" font-size="9.1" fill="#7c2400" class="s" textLength="45.3" lengthAdjust="spacingAndGlyphs" >Audio Input</text>
<line x1="240.9" y1="247.7" x2="278.2" y2="247.7" stroke="#56565e" stroke-width="1.2" />
<line x1="277.7" y1="247.4" x2="277.7" y2="262.2" stroke="#56565e" stroke-width="1.1" />
<path d="M277.7 262.2 l-1.6 1.1 l3.2 2.1 l-3.2 2.1 l3.2 2.1 l-3.2 2.1 l3.2 2.1 l-1.6 1.1" stroke="#2424e2" stroke-width="1.1" fill="none" />
<line x1="277.7" y1="274.9" x2="277.7" y2="289" stroke="#3a3a3a" stroke-width="0.9" />
<line x1="277.7" y1="289" x2="277.7" y2="299.2" stroke="#800000" stroke-width="0.9" />
<line x1="267.3" y1="299.2" x2="288.09999999999997" y2="299.2" stroke="#800000" stroke-width="0.9" />
<line x1="270.4" y1="302.3" x2="285.0" y2="302.3" stroke="#800000" stroke-width="0.9" />
<line x1="273.2" y1="305.4" x2="282.2" y2="305.4" stroke="#800000" stroke-width="0.9" />
<line x1="276.7" y1="308.5" x2="278.7" y2="308.5" stroke="#800000" stroke-width="0.7" />
<text x="268" y="317.4" font-size="8.8" fill="#800000" class="s" textLength="19.8" lengthAdjust="spacingAndGlyphs" >GND</text>
<path d="M281.3 268.6 L286.9 266.2 L286.9 271 Z" stroke="none" stroke-width="0" fill="#2424e2" />
<text x="300.8" y="254.7" font-size="9.1" fill="#24248e" class="s" textLength="9.7" lengthAdjust="spacingAndGlyphs" >R3</text>
<text x="300.8" y="265.2" font-size="9.1" fill="#24248e" class="s" textLength="18.2" lengthAdjust="spacingAndGlyphs" >RPot</text>
<text x="301" y="275.6" font-size="9.1" fill="#24248e" class="s" textLength="15" lengthAdjust="spacingAndGlyphs" >10K</text>
</g>
<g id="active-bar">
<rect x="334.2" y="48" width="222.8" height="2" fill="#b4b4b4" />
<rect x="334.2" y="49.7" width="222.8" height="15.7" fill="#3a3a3a" rx="1.4"/>
<path d="M340.5 54.2 L348.4 54.2 L345.7 57.4 L345.7 61 L343.3 61 L343.3 57.4 Z" stroke="none" stroke-width="0" fill="#a8e0f8" />
<line x1="357" y1="57.6" x2="365" y2="57.6" stroke="#56617c" stroke-width="0.8" />
<line x1="361" y1="53.6" x2="361" y2="61.6" stroke="#56617c" stroke-width="0.8" />
<rect x="374.6" y="53.8" width="7.6" height="7.6" fill="none" stroke="#56617c" stroke-width="0.8" stroke-dasharray="1.4 0.8"/>
<line x1="391.6" y1="55.2" x2="398.6" y2="55.2" stroke="#8c8c8c" stroke-width="0.8" />
<rect x="392.6" y="56.6" width="5" height="2.2" fill="#8c8c8c" />
<line x1="391.6" y1="60.4" x2="398.6" y2="60.4" stroke="#8c8c8c" stroke-width="0.8" />
<line x1="391.8" y1="53.6" x2="391.8" y2="61.6" stroke="#8c8c8c" stroke-width="0.7" />
<rect x="408.8" y="53.4" width="6.8" height="8.6" fill="#f0d23e" rx="0.6"/>
<rect x="410.2" y="55" width="4" height="5.4" fill="#f8e57c" />
<path d="M425.4 56 Q427.4 53.8 429.6 56 T433.8 56 M425.4 59.6 Q427.4 57.4 429.6 59.6 T433.8 59.6" stroke="#4f9ce2" stroke-width="0.9" fill="none" />
<line x1="446.3" y1="53.4" x2="446.3" y2="58.4" stroke="#c23434" stroke-width="0.9" />
<line x1="442.6" y1="58.4" x2="450" y2="58.4" stroke="#c23434" stroke-width="0.9" />
<line x1="444" y1="60" x2="448.6" y2="60" stroke="#c23434" stroke-width="0.9" />
<line x1="445.4" y1="61.6" x2="447.2" y2="61.6" stroke="#c23434" stroke-width="0.9" />
<rect x="458.6" y="53.1" width="2.6" height="9.5" fill="#e6eeff" />
<line x1="461.2" y1="57.8" x2="468.6" y2="57.8" stroke="#3b6fd0" stroke-width="0.9" />
<rect x="475.8" y="55" width="7.4" height="5.5" fill="#7fd48f" rx="0.4"/>
<path d="M491.9 55 L497.8 55 L500.5 57.75 L497.8 60.5 L491.9 60.5 Z" stroke="none" stroke-width="0" fill="#f0d040" />
<circle cx="513.9" cy="57.8" r="3.7" fill="none" stroke="#b52626" stroke-width="1"/>
<line x1="513.9" y1="55.8" x2="513.9" y2="58.6" stroke="#b52626" stroke-width="0.9" />
<text x="526.6" y="62" font-size="11.5" fill="#4f7fe0" class="s" >A</text>
<path d="M542.4 62 L542.4 58.4 A4.1 4.1 0 0 1 550.6 58.4 L550.6 62" stroke="#3f4f92" stroke-width="0.9" fill="none" />
<path d="M366.7 64.6 L368.59999999999997 64.6 L368.59999999999997 62.7 Z" stroke="none" stroke-width="0" fill="#d4d4d4" />
<path d="M383.4 64.6 L385.29999999999995 64.6 L385.29999999999995 62.7 Z" stroke="none" stroke-width="0" fill="#d4d4d4" />
<path d="M400.5 64.6 L402.4 64.6 L402.4 62.7 Z" stroke="none" stroke-width="0" fill="#d4d4d4" />
<path d="M435.2 64.6 L437.09999999999997 64.6 L437.09999999999997 62.7 Z" stroke="none" stroke-width="0" fill="#d4d4d4" />
<path d="M451.3 64.6 L453.2 64.6 L453.2 62.7 Z" stroke="none" stroke-width="0" fill="#d4d4d4" />
<path d="M468 64.6 L469.9 64.6 L469.9 62.7 Z" stroke="none" stroke-width="0" fill="#d4d4d4" />
<path d="M484.6 64.6 L486.5 64.6 L486.5 62.7 Z" stroke="none" stroke-width="0" fill="#d4d4d4" />
<path d="M501.9 64.6 L503.79999999999995 64.6 L503.79999999999995 62.7 Z" stroke="none" stroke-width="0" fill="#d4d4d4" />
<path d="M519.2 64.6 L521.1 64.6 L521.1 62.7 Z" stroke="none" stroke-width="0" fill="#d4d4d4" />
<path d="M535.7 64.6 L537.6 64.6 L537.6 62.7 Z" stroke="none" stroke-width="0" fill="#d4d4d4" />
<path d="M552.5 64.6 L554.4 64.6 L554.4 62.7 Z" stroke="none" stroke-width="0" fill="#d4d4d4" />
</g>
</svg>
</body>
</html>
